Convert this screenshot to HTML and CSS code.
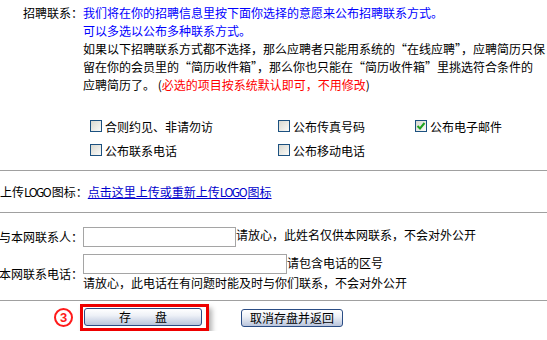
FILE: index.html
```html
<!DOCTYPE html>
<html lang="zh-CN">
<head>
    <meta charset="UTF-8">
    <title>招聘联系方式</title>
    <link rel="stylesheet" href="styles.css">
</head>
<body>
    <div class="page">
        <!-- 招聘联系说明 -->
        <div class="intro">
            <div class="label">招聘联系：</div>
            <div class="desc">
                <p class="blue">我们将在你的招聘信息里按下面你选择的意愿来公布招聘联系方式。<br>可以多选以公布多种联系方式。</p>
                <p>如果以下招聘联系方式都不选择，那么应聘者只能用系统的“在线应聘”，应聘简历只保<br>留在你的会员里的“简历收件箱”，那么你也只能在“简历收件箱”里挑选符合条件的<br>应聘简历了。 (<span class="red">必选的项目按系统默认即可，不用修改</span>)</p>
            </div>
        </div>

        <!-- 联系方式选项 -->
        <div class="options">
            <label class="opt"><span class="box"></span>合则约见、非请勿访</label>
            <label class="opt"><span class="box"></span>公布传真号码</label>
            <label class="opt"><span class="box checked"><svg width="10" height="10" viewBox="0 0 10 10"><path d="M1.5 5 L4 7.5 L8.5 2" fill="none" stroke="#1fa31f" stroke-width="2"/></svg></span>公布电子邮件</label>
            <label class="opt"><span class="box"></span>公布联系电话</label>
            <label class="opt"><span class="box"></span>公布移动电话</label>
        </div>

        <div class="upload">
            <div class="label">上传<span class="latin">LOGO</span>图标：</div>
            <a href="#">点击这里上传或重新上传<span class="latin">LOGO</span>图标</a>
        </div>

        <div class="contact">
            <div class="label">与本网联系人：</div>
            <div class="field"><input type="text" class="name-input">请放心，此姓名仅供本网联系，不会对外公开</div>
            <div class="label">本网联系电话：</div>
            <div class="field">
                <div><input type="text" class="tel-input">请包含电话的区号</div>
                <div class="note">请放心，此电话在有问题时能及时与你们联系，不会对外公开</div>
            </div>
        </div>

        <div class="actions">
            <span class="step">3</span>
            <span class="mark"><button class="btn save">存　　盘</button></span>
            <button class="btn cancel">取消存盘并返回</button>
        </div>
    </div>
</body>
</html>
```

FILE: styles.css
```css
html, body {
    margin: 0;
    padding: 0;
    background-color: #fff;
    overflow: hidden;
}
body {
    font-family: "Noto Sans CJK SC", "Liberation Sans", sans-serif;
    font-size: 12px;
    color: #000;
}
.page {
    width: 547px;
}
.label {
    display: flex;
    justify-content: flex-end;
    white-space: nowrap;
}
.latin {
    letter-spacing: -1.5px;
    margin-right: 1.5px;
}
.intro {
    display: grid;
    grid-template-columns: 83px 1fr;
    padding-top: 4px;
    line-height: 18px;
}
.desc p {
    margin: 0;
    white-space: nowrap;
}
.blue {
    color: #0000ff;
}
.red {
    color: #ff0000;
}
.options {
    display: grid;
    grid-template-columns: 188px 137px 1fr;
    grid-auto-rows: 24px;
    padding-left: 90px;
    margin-top: 20px;
    margin-bottom: 8px;
}
.opt {
    display: flex;
    align-items: center;
    gap: 3px;
}
.box {
    width: 12px;
    height: 12px;
    box-sizing: border-box;
    border: 1px solid #1c5180;
    background: linear-gradient(135deg, #d8d8d0, #fbfbf9);
    display: flex;
    align-items: center;
    justify-content: center;
}
.upload {
    display: grid;
    grid-template-columns: minmax(83px, max-content) 1fr;
    align-items: center;
    height: 41px;
    border-top: 1px solid #a0a0a0;
    border-bottom: 1px solid #a0a0a0;
}
.upload .label {
    justify-content: flex-start;
}
.upload a {
    color: #0000cc;
}
.contact {
    display: grid;
    grid-template-columns: 83px 1fr;
    row-gap: 7px;
    align-items: center;
    padding: 13px 0 8px;
    border-bottom: 1px solid #a0a0a0;
}
.field input {
    box-sizing: border-box;
    height: 20px;
    margin: 0;
    border: 1px solid #a5a5a5;
    vertical-align: middle;
}
.name-input {
    width: 153px;
}
.tel-input {
    width: 204px;
}
.note {
    line-height: 18px;
}
.actions {
    display: flex;
    align-items: center;
    padding: 3px 0 0 54px;
}
.step {
    width: 19px;
    height: 19px;
    box-sizing: border-box;
    border: 2px solid #ff1a1a;
    border-radius: 50%;
    color: #ff1a1a;
    font: bold 13px "Liberation Sans", sans-serif;
    display: flex;
    align-items: center;
    justify-content: center;
}
.mark {
    margin-left: 7px;
    border: 3px solid #ee0000;
    padding: 1px 4px 2px 1px;
    display: flex;
    box-shadow: 3px 4px 5px rgba(0, 0, 0, 0.3);
}
.btn {
    height: 18px;
    padding: 0;
    border: 1px solid #2b4d85;
    border-radius: 3px;
    background: linear-gradient(#ffffff, #eef1f7 40%, #b9c5dc);
    font-family: "Noto Sans CJK SC", sans-serif;
    font-size: 12px;
    line-height: 16px;
    color: #000;
}
.save {
    width: 118px;
}
.cancel {
    width: 102px;
    margin-left: 32px;
}
```
